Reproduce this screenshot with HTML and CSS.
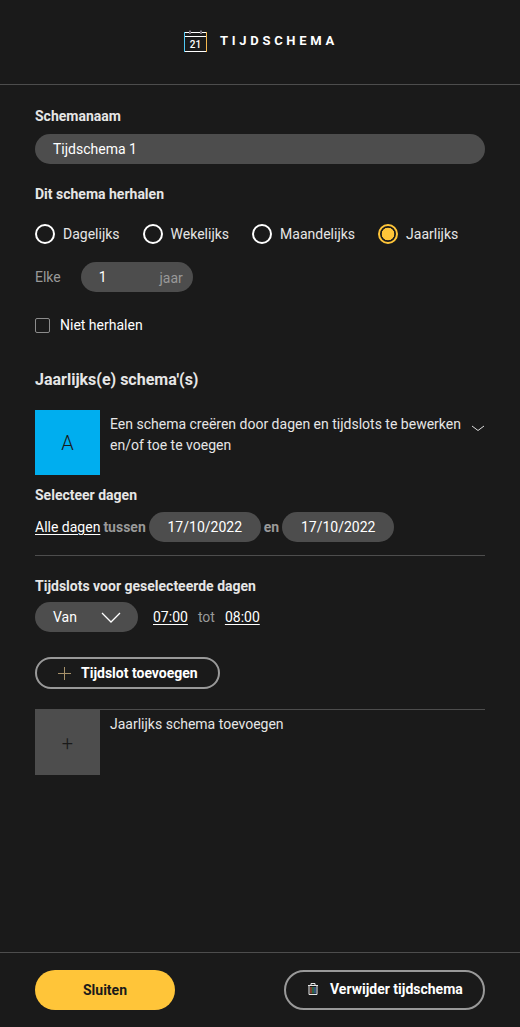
FILE: index.html
```html
<!DOCTYPE html>
<html lang="nl">
<head>
<meta charset="utf-8">
<title>Tijdschema</title>
<link rel="stylesheet" href="styles.css">
</head>
<body>
<div class="app">
  <header class="header">
    <svg class="cal" width="23" height="22" viewBox="0 0 23 22" fill="none" stroke="#fff" stroke-width="1">
      <path d="M1 2.500H5M7 2.500H16M18 2.500H22M1 21.500H22M1 6.500H22" />
      <path d="M0.500 2V22" stroke="#4fc8f5"/>
      <path d="M22.500 2V22" stroke="#f5b84f"/>
      <path d="M6 0.500V4M17 0.500V4" stroke="#d8c8e0"/>
      <text x="11.500" y="18" text-anchor="middle" class="cal-num">21</text>
    </svg>
    <h1 class="title">TIJDSCHEMA</h1>
  </header>
  <main class="main">
    <div class="label first">Schemanaam</div>
    <div class="pill name">Tijdschema 1</div>
    <div class="label repeat">Dit schema herhalen</div>
    <div class="radios">
      <span class="radio-item r1"><i class="radio"></i>Dagelijks</span>
      <span class="radio-item r2"><i class="radio"></i>Wekelijks</span>
      <span class="radio-item r3"><i class="radio"></i>Maandelijks</span>
      <span class="radio-item"><i class="radio on"></i>Jaarlijks</span>
    </div>
    <div class="every">
      <span class="muted">Elke</span>
      <div class="pill count"><span>1</span><span class="muted">jaar</span></div>
    </div>
    <div class="check"><i class="box"></i><span class="check-text">Niet herhalen</span></div>
    <h2 class="heading">Jaarlijks(e) schema'(s)</h2>
    <div class="sched">
      <div class="square blue">A</div>
      <p class="sched-text">Een schema creëren door dagen en tijdslots te bewerken en/of toe te voegen</p>
      <svg class="chev" width="14" height="7" viewBox="0 0 14 7" fill="none" stroke="#ddd" stroke-width="1"><path d="M1 1L7 5.500L13 1"/></svg>
    </div>
    <div class="label days">Selecteer dagen</div>
    <div class="date-row">
      <a class="link">Alle dagen</a>
      <span class="between">tussen</span>
      <span class="pill date">17/10/2022</span>
      <span class="between">en</span>
      <span class="pill date">17/10/2022</span>
    </div>
    <hr class="rule r-days">
    <div class="label slots">Tijdslots voor geselecteerde dagen</div>
    <div class="time-row">
      <div class="pill van">Van
        <svg width="20" height="11" viewBox="0 0 20 11" fill="none" stroke="#fff" stroke-width="1.300"><path d="M1 1L10 10L19 1"/></svg>
      </div>
      <a class="link time">07:00</a>
      <span class="muted tot">tot</span>
      <a class="link time">08:00</a>
    </div>
    <button class="outline add">
      <svg width="13" height="13" viewBox="0 0 13 13" stroke="#a8926a" stroke-width="1"><path d="M6.500 0V13M0 6.500H13"/></svg>
      Tijdslot toevoegen
    </button>
    <hr class="rule r-add">
    <div class="sched new">
      <div class="square grey">+</div>
      <p class="sched-text">Jaarlijks schema toevoegen</p>
    </div>
  </main>
  <footer class="footer">
    <button class="primary">Sluiten</button>
    <button class="outline delete">
      <svg width="10" height="12" viewBox="0 0 10 12" fill="none" stroke="#e8e8e8" stroke-width="1"><path d="M0 2.500H10M3 2.500V0.500H7V2.500M1 2.500V11.500H9V2.500"/><path d="M3 4V10.500" stroke="#e0603c"/><path d="M5 4V10.500" stroke="#3cb070"/><path d="M7 4V10.500" stroke="#4c8ce0"/></svg>
      Verwijder tijdschema
    </button>
  </footer>
</div>
</body>
</html>
```
FILE: styles.css
```css
* { box-sizing: border-box; }
html, body { margin: 0; padding: 0; }
body { background: #1a1a1a; color: #e6e6e6; font-family: Roboto, "Liberation Sans", sans-serif; font-size: 14px; }
.app { width: 520px; height: 1027px; display: flex; flex-direction: column; overflow: hidden; }

.header { height: 85px; border-bottom: 1px solid #4d4d4d; display: flex; align-items: center; justify-content: center; gap: 13px; padding-bottom: 2px; }
.cal { margin-left: 2px; }
.cal-num { font: 500 10px Roboto, sans-serif; fill: #fff; stroke: none; }
.title { margin: 0; font-size: 13px; font-weight: 700; letter-spacing: 3.700px; color: #fff; line-height: 14px; }

.main { flex: 1; padding: 0 35px; }
.label { font-weight: 700; font-size: 14px; line-height: 16px; color: #e6e6e6; }
.first { margin-top: 23px; }
.pill { background: #4d4d4d; border-radius: 15px; height: 30px; display: flex; align-items: center; color: #fff; }
.name { margin-top: 10px; padding-left: 18px; width: 450px; }
.repeat { margin-top: 22px; }

.radios { display: flex; margin-top: 22px; height: 20px; align-items: center; }
.radio-item { display: inline-flex; align-items: center; gap: 8px; color: #e6e6e6; }
.r1 { margin-right: 23px; }
.r2 { margin-right: 23px; }
.r3 { margin-right: 23px; }
.radio { width: 20px; height: 20px; border: 2px solid #fff; border-radius: 50%; display: block; }
.radio.on { border-color: #ffc539; background: radial-gradient(circle, #ffc539 0 6px, transparent 6.600px); }

.every { display: flex; align-items: center; margin-top: 18px; gap: 20px; }
.muted { color: #999; }
.count { width: 112px; justify-content: space-between; padding: 0 10px 0 18px; }
.count .muted { padding-top: 2px; }

.check { display: flex; align-items: center; gap: 10px; margin-top: 26px; height: 15px; color: #fff; }
.check-text { padding-bottom: 2px; }
.box { width: 15px; height: 15px; border: 1.500px solid #8c8c8c; border-radius: 2px; display: block; }

.heading { margin: 37px 0 0; font-size: 16px; line-height: 20px; font-weight: 700; color: #e6e6e6; }

.sched { display: flex; margin-top: 20px; position: relative; }
.square { width: 65px; height: 65px; flex: none; display: flex; align-items: center; justify-content: center; }
.blue { background: #00aeef; color: #1a1a1a; font-size: 20px; font-weight: 300; }
.grey { background: #4d4d4d; color: #1a1a1a; font-size: 20px; font-weight: 300; }
.sched-text { margin: 4px 0 0 10px; width: 360px; line-height: 21px; color: #e6e6e6; font-size: 14px; }
.chev { position: absolute; right: 0; top: 15px; }

.days { margin-top: 12px; }
.date-row { display: flex; align-items: center; margin-top: 9px; }
.link { color: #fff; text-decoration: underline; text-underline-offset: 2px; }
.between { color: #999; font-weight: 700; font-size: 14px; margin: 0 3px; }
.date { width: 112px; justify-content: center; }
.rule { border: 0; height: 1px; background: #4d4d4d; margin: 0; }
.r-days { margin-top: 13px; }

.slots { margin-top: 22px; }
.time-row { display: flex; align-items: center; margin-top: 8px; }
.van { width: 103px; padding: 0 17px 0 18px; justify-content: space-between; margin-right: 15px; }
.tot { margin: 0 10px; }

.outline { background: transparent; border: 2px solid #999; border-radius: 21px; color: #fff; font-family: inherit; font-weight: 700; font-size: 14px; display: flex; align-items: center; padding: 0; }
.add { margin-top: 25px; width: 185px; height: 32px; padding-left: 21px; gap: 10px; }
.r-add { margin-top: 20px; }
.new { margin-top: 0; }

.footer { height: 75px; border-top: 1px solid #4d4d4d; display: flex; justify-content: space-between; align-items: flex-start; padding: 17px 35px 0; }
.primary { width: 140px; height: 40px; background: #ffc539; border: 0; border-radius: 20px; color: #1a1a1a; font-family: inherit; font-weight: 700; font-size: 14px; padding-bottom: 2px; }
.delete { width: 201px; height: 40px; border-width: 2px; border-radius: 20px; padding: 0 0 2px 22px; gap: 12px; }
```
